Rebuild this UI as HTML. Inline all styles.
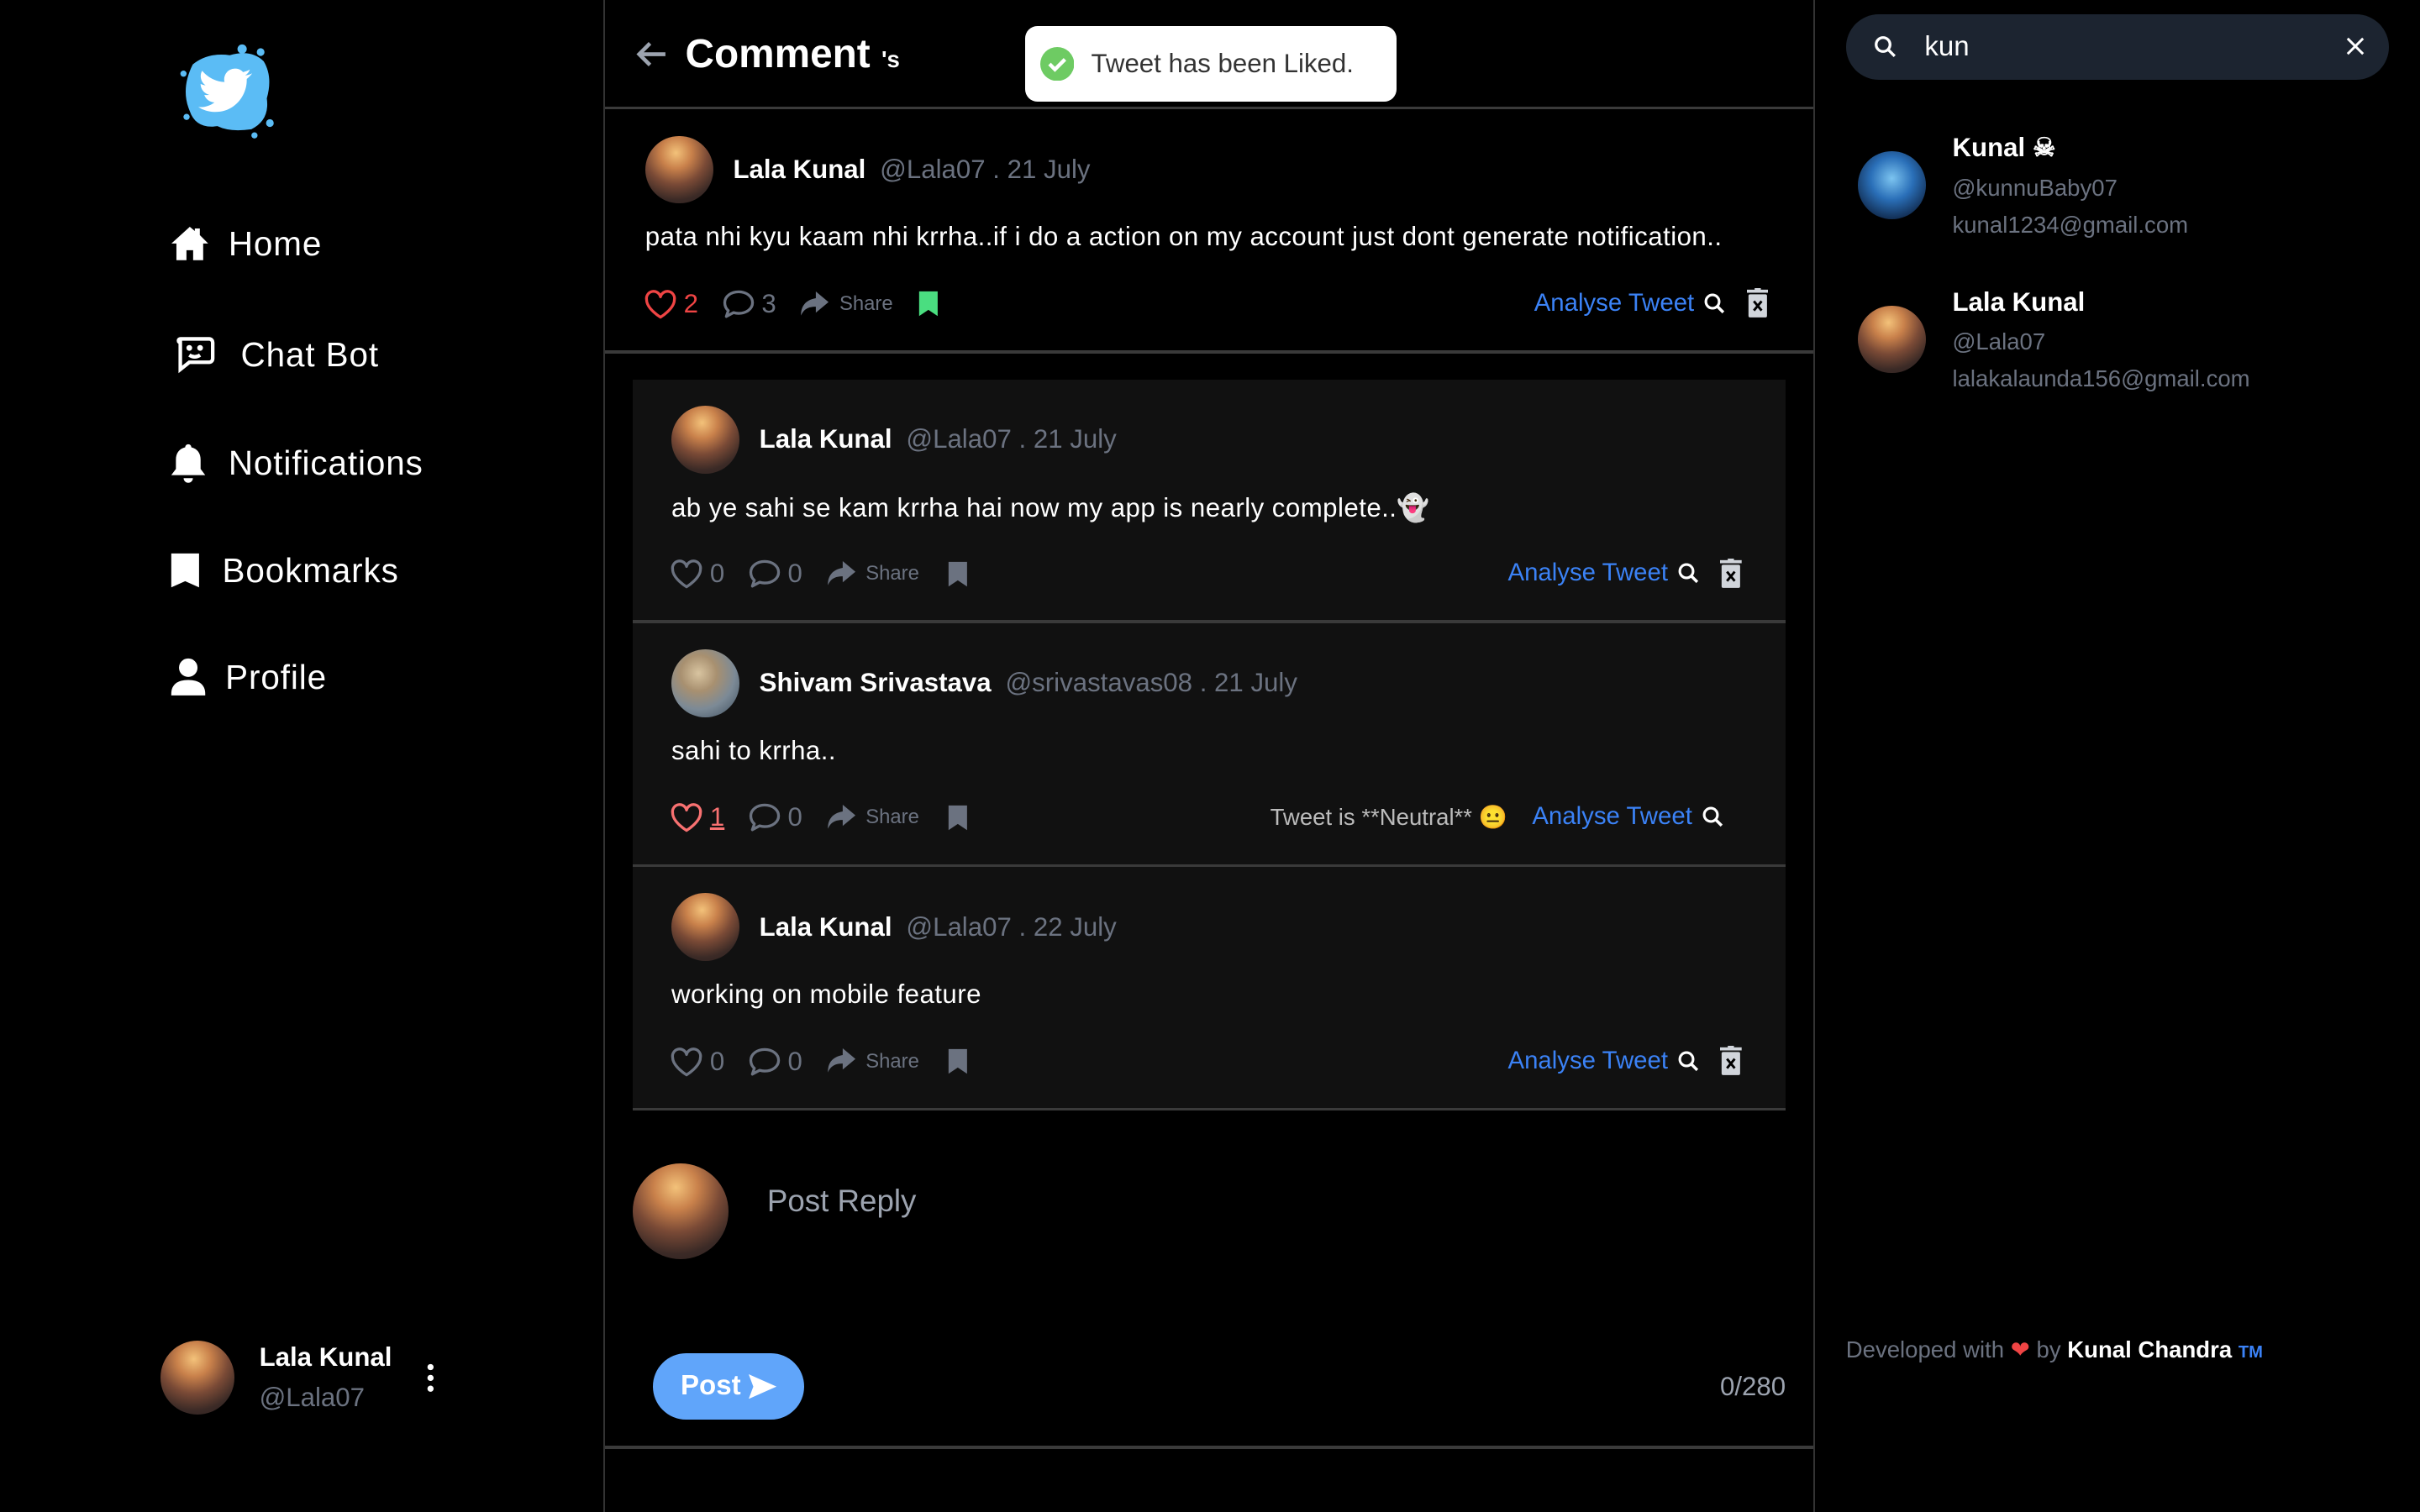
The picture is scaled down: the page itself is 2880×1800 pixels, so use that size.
<!DOCTYPE html>
<html><head><meta charset="utf-8">
<style>
*{box-sizing:border-box;margin:0;padding:0}
html,body{background:#000;overflow:hidden}
body{width:2880px;height:1800px}
#r{zoom:1.836735;width:1568px;height:980px;position:relative;font-family:"Liberation Sans",sans-serif;color:#fff}
.a{position:absolute}
.av{position:absolute;border-radius:50%;background:radial-gradient(circle at 45% 25%,#f3c27a 0,#c9814b 25%,#7a4a36 50%,#3b2a26 75%,#2a1f1f 100%)}
.nav{position:absolute;left:110px;font-size:22px;display:flex;align-items:center;letter-spacing:.5px}
.nm{font-weight:bold;font-size:17px}
.hd{color:#6b7280;font-size:17px}
.tx{font-size:17px;letter-spacing:.25px}
.act{position:absolute;display:flex;align-items:center;color:#6b7280;font-size:17px}
.sh{font-size:13px;margin-left:5px}
.blue{color:#3b82f6;font-size:16px}
.line{position:absolute;height:2px;background:#3a3a3a}
.act svg{display:block}
</style></head><body><div id="r">
<svg class="a" style="left:115px;top:28px" width="66" height="62" viewBox="0 0 66 62"><g fill="#5bbcf5"><path d="M10 14 Q20 6 34 8 Q48 4 56 12 Q62 22 58 36 Q60 50 48 56 Q34 58 26 54 Q12 56 8 44 Q2 30 10 14Z"/><circle cx="42" cy="4" r="3"/><circle cx="54" cy="6" r="2.5"/><circle cx="6" cy="48" r="2"/><circle cx="60" cy="52" r="2.5"/><circle cx="4" cy="20" r="2"/><circle cx="50" cy="60" r="2"/></g><path fill="#fff" d="M48 20c-1.3.6-2.6 1-4 1.1 1.4-.9 2.5-2.2 3-3.800-1.3.8-2.800 1.300-4.400 1.700a7 7 0 0 0-12 6.400c-5.800-.3-11-3.100-14.500-7.300-1.900 3.200-.8 7.400 2.200 9.400-1.100 0-2.200-.4-3.200-.9 0 3.400 2.400 6.300 5.600 7-1 .3-2.100.3-3.200.1.900 2.800 3.500 4.800 6.600 4.900-3 2.300-6.800 3.400-10.500 3 3.200 2.100 7 3.200 10.900 3.200 13.200 0 20.500-11 20.500-20.500v-.9c1.400-1 2.600-2.300 3.600-3.700z"/></svg>
<div class="nav" style="top:145px"><svg width="26" height="26" viewBox="0 0 24 24"><path fill="#fff" d="M12 2 1 12h3v10h6v-6h4v6h6V12h3L18 7V3h-3v1.5z"/></svg><span style="margin-left:12px">Home</span></div>
<div class="nav" style="top:216px;left:112px"><svg width="28" height="28" viewBox="0 0 24 24" fill="none" stroke="#fff" stroke-width="2"><path d="M4 3h16a2 2 0 0 1 2 2v9a2 2 0 0 1-2 2H9l-5 4V5a1 1 0 0 1 0-2z"/><circle cx="9" cy="8" r=".6" fill="#fff"/><circle cx="15" cy="8" r=".6" fill="#fff"/><path d="M9 12q3 2 6 0"/></svg><span style="margin-left:16px">Chat Bot</span></div>
<div class="nav" style="top:287px"><svg width="24" height="26" viewBox="0 0 24 26"><path fill="#fff" d="M12 1a2 2 0 0 1 2 2c4 1 6 4 6 8v6l3 4H1l3-4v-6c0-4 2-7 6-8a2 2 0 0 1 2-2zM9 23h6a3 3 0 0 1-6 0z"/></svg><span style="margin-left:14px">Notifications</span></div>
<div class="nav" style="top:357px"><svg width="20" height="24" viewBox="0 0 20 24"><path fill="#fff" d="M1 1h18v22l-9-4-9 4z"/></svg><span style="margin-left:14px">Bookmarks</span></div>
<div class="nav" style="top:426px"><svg width="24" height="26" viewBox="0 0 24 26"><circle cx="12" cy="7" r="6" fill="#fff"/><path fill="#fff" d="M1 24c0-6 4-9 11-9s11 3 11 9v1H1z"/></svg><span style="margin-left:12px">Profile</span></div>
<div class="av" style="left:104px;top:869px;width:48px;height:48px"></div>
<div class="a nm" style="left:168px;top:870px">Lala Kunal</div>
<div class="a hd" style="left:168px;top:896px">@Lala07</div>
<svg class="a" style="left:275px;top:883px" width="8" height="20"><circle cx="4" cy="3" r="2" fill="#fff"/><circle cx="4" cy="10" r="2" fill="#fff"/><circle cx="4" cy="17" r="2" fill="#fff"/></svg>
<div class="a" style="left:391px;top:0;width:1px;height:980px;background:#333"></div>
<div class="a" style="left:1175px;top:0;width:1px;height:980px;background:#333"></div>
<svg class="a" style="left:412px;top:26px" width="20" height="18" viewBox="0 0 20 18"><path d="M19 9H3M9 2 2 9l7 7" stroke="#9ca3af" stroke-width="2.5" fill="none"/></svg>
<div class="a" style="left:444px;top:20px;font-size:26px;font-weight:bold">Comment <span style="font-size:15px">'s</span></div>
<div class="a" style="left:664px;top:17px;width:241px;height:49px;background:#fff;border-radius:8px;display:flex;align-items:center;padding-left:10px;color:#333;font-size:17px"><svg width="22" height="22" viewBox="0 0 22 22"><circle cx="11" cy="11" r="11" fill="#6ecb63"/><path d="M6 11l3.5 3.5L16 8" stroke="#fff" stroke-width="2.4" fill="none"/></svg><span style="margin-left:11px">Tweet has been Liked.</span></div>
<div class="line" style="left:392px;top:69px;width:783px"></div>

<svg width="0" height="0" style="position:absolute"><defs>
<path id="ht" d="M12 20.5S3 15 3 9.2A4.6 4.6 0 0 1 12 7.3a4.6 4.6 0 0 1 9 1.9C21 15 12 20.5 12 20.5z" fill="none" stroke-width="1.8" stroke-linejoin="round"/>
<path id="cm" d="M12 4c5 0 9 3 9 7s-4 7-9 7c-1.2 0-2.300-.2-3.300-.5L4 20l1.300-3.800C3.800 14.900 3 13 3 11c0-4 4-7 9-7z" fill="none" stroke-width="1.8" stroke-linejoin="round"/>
<path id="sr" d="M13 3l9 7.500-9 7.500v-4.300c-5.500 0-8.500 1.800-10.500 6.300 0-6.500 3-11 10.500-12.300z"/>
<g id="tr"><rect x="1" y="4" width="12" height="15" rx="1" fill="#d1d5db"/><rect x="0" y="1" width="14" height="2" fill="#d1d5db"/><rect x="5" y="0" width="4" height="2" fill="#d1d5db"/><path d="M4.5 8.5l5 6M9.5 8.5l-5 6" stroke="#000" stroke-width="1.6"/></g>
<g id="mg"><circle cx="6" cy="6" r="4.3" stroke-width="1.7" fill="none"/><path d="M9.2 9.2l3.800 3.800" stroke-width="1.9"/></g>
</defs></svg>

<div class="av" style="left:418px;top:88px;width:44px;height:44px"></div>
<div class="a" style="left:475px;top:100px"><span class="nm">Lala Kunal</span> <span class="hd">&nbsp;@Lala07 . 21 July</span></div>
<div class="a tx" style="left:418px;top:144px">pata nhi kyu kaam nhi krrha..if i do a action on my account just dont generate notification..</div>
<div class="act" style="left:416px;top:185px"><svg width="24" height="24" viewBox="0 0 24 24" stroke="#ef4444"><use href="#ht"/></svg><span style="color:#ef4444;margin-left:3px">2</span>
<svg style="margin-left:14px" width="24" height="24" viewBox="0 0 24 24" stroke="#6b7280"><use href="#cm"/></svg><span style="margin-left:3px">3</span><svg style="margin-left:14px" width="22" height="22" viewBox="0 0 24 24" fill="#6b7280"><use href="#sr"/></svg><span class="sh">Share</span>
<svg style="margin-left:16px" width="14" height="18"><path d="M1 1h12v16l-6-4-6 4z" fill="#4ade80"/></svg></div>
<div class="act" style="left:994px;top:187px"><span class="blue">Analyse Tweet</span><svg style="margin-left:6px" width="14" height="14" stroke="#fff"><use href="#mg"/></svg><svg style="margin-left:14px" width="14" height="19"><use href="#tr"/></svg></div>
<div class="line" style="left:392px;top:227px;width:783px"></div>

<div class="a" style="left:410px;top:246px;width:747px;height:473px;background:#111"></div>
<div class="line" style="left:410px;top:402px;width:747px"></div>
<div class="line" style="left:410px;top:560px;width:747px"></div>
<div class="line" style="left:410px;top:718px;width:747px"></div>

<div class="av" style="left:435px;top:263px;width:44px;height:44px"></div>
<div class="a" style="left:492px;top:275px"><span class="nm">Lala Kunal</span> <span class="hd">&nbsp;@Lala07 . 21 July</span></div>
<div class="a tx" style="left:435px;top:319px">ab ye sahi se kam krrha hai now my app is nearly complete..👻</div>
<div class="act" style="left:433px;top:360px"><svg width="24" height="24" viewBox="0 0 24 24" stroke="#6b7280"><use href="#ht"/></svg><span style="margin-left:3px">0</span><svg style="margin-left:14px" width="24" height="24" viewBox="0 0 24 24" stroke="#6b7280"><use href="#cm"/></svg><span style="margin-left:3px">0</span><svg style="margin-left:14px" width="22" height="22" viewBox="0 0 24 24" fill="#6b7280"><use href="#sr"/></svg><span class="sh">Share</span><svg style="margin-left:18px" width="14" height="18"><path d="M1 1h12v16l-6-4-6 4z" fill="#6b7280"/></svg></div>
<div class="act" style="left:977px;top:362px"><span class="blue">Analyse Tweet</span><svg style="margin-left:6px" width="14" height="14" stroke="#fff"><use href="#mg"/></svg><svg style="margin-left:14px" width="14" height="19"><use href="#tr"/></svg></div>

<div class="av" style="left:435px;top:421px;width:44px;height:44px;background:radial-gradient(circle at 40% 35%,#d8c4a0 0,#a89070 30%,#7c8a96 60%,#3a4a5a 100%)"></div>
<div class="a" style="left:492px;top:433px"><span class="nm">Shivam Srivastava</span> <span class="hd">&nbsp;@srivastavas08 . 21 July</span></div>
<div class="a tx" style="left:435px;top:477px">sahi to krrha..</div>
<div class="act" style="left:433px;top:518px"><svg width="24" height="24" viewBox="0 0 24 24" stroke="#f87171"><use href="#ht"/></svg><span style="color:#f87171;margin-left:3px;text-decoration:underline">1</span><svg style="margin-left:14px" width="24" height="24" viewBox="0 0 24 24" stroke="#6b7280"><use href="#cm"/></svg><span style="margin-left:3px">0</span><svg style="margin-left:14px" width="22" height="22" viewBox="0 0 24 24" fill="#6b7280"><use href="#sr"/></svg><span class="sh">Share</span><svg style="margin-left:18px" width="14" height="18"><path d="M1 1h12v16l-6-4-6 4z" fill="#6b7280"/></svg></div>
<div class="act" style="left:823px;top:520px"><span style="color:#bbb;font-size:15px">Tweet is **Neutral** 😐</span><span class="blue" style="margin-left:16px">Analyse Tweet</span><svg style="margin-left:6px" width="14" height="14" stroke="#fff"><use href="#mg"/></svg></div>

<div class="av" style="left:435px;top:579px;width:44px;height:44px"></div>
<div class="a" style="left:492px;top:591px"><span class="nm">Lala Kunal</span> <span class="hd">&nbsp;@Lala07 . 22 July</span></div>
<div class="a tx" style="left:435px;top:635px">working on mobile feature</div>
<div class="act" style="left:433px;top:676px"><svg width="24" height="24" viewBox="0 0 24 24" stroke="#6b7280"><use href="#ht"/></svg><span style="margin-left:3px">0</span><svg style="margin-left:14px" width="24" height="24" viewBox="0 0 24 24" stroke="#6b7280"><use href="#cm"/></svg><span style="margin-left:3px">0</span><svg style="margin-left:14px" width="22" height="22" viewBox="0 0 24 24" fill="#6b7280"><use href="#sr"/></svg><span class="sh">Share</span><svg style="margin-left:18px" width="14" height="18"><path d="M1 1h12v16l-6-4-6 4z" fill="#6b7280"/></svg></div>
<div class="act" style="left:977px;top:678px"><span class="blue">Analyse Tweet</span><svg style="margin-left:6px" width="14" height="14" stroke="#fff"><use href="#mg"/></svg><svg style="margin-left:14px" width="14" height="19"><use href="#tr"/></svg></div>

<div class="av" style="left:410px;top:754px;width:62px;height:62px"></div>
<div class="a" style="left:497px;top:767px;font-size:20px;color:#9ca3af">Post Reply</div>
<div class="a" style="left:423px;top:877px;width:98px;height:43px;background:#60a5fa;border-radius:22px;display:flex;align-items:center;justify-content:center;font-weight:bold;font-size:18px">Post&nbsp;<svg width="18" height="16" viewBox="0 0 18 16"><path d="M0 0l18 8-18 8 3-8z" fill="#fff"/></svg></div>
<div class="a" style="left:1100px;top:889px;font-size:17px;color:#9ca3af;width:57px;text-align:right">0/280</div>
<div class="line" style="left:392px;top:937px;width:783px"></div>

<div class="a" style="left:1196px;top:9px;width:352px;height:43px;background:#1c2430;border-radius:22px"></div>
<svg class="a" style="left:1214px;top:23px" width="15" height="15" viewBox="0 0 15 15"><circle cx="6" cy="6" r="4.5" stroke="#fff" stroke-width="1.8" fill="none"/><path d="M9.5 9.5l4 4" stroke="#fff" stroke-width="1.8"/></svg>
<div class="a" style="left:1247px;top:20px;font-size:18px">kun</div>
<svg class="a" style="left:1520px;top:24px" width="12" height="12"><path d="M1 1l10 10M11 1 1 11" stroke="#fff" stroke-width="1.6"/></svg>
<div class="av" style="left:1204px;top:98px;width:44px;height:44px;background:radial-gradient(circle at 50% 40%,#7cc4f0 0,#2a6fb8 40%,#10284a 80%)"></div>
<div class="a nm" style="left:1265px;top:86px">Kunal ☠</div>
<div class="a hd" style="left:1265px;top:113px;font-size:15px">@kunnuBaby07</div>
<div class="a hd" style="left:1265px;top:137px;font-size:15px">kunal1234@gmail.com</div>
<div class="av" style="left:1204px;top:198px;width:44px;height:44px"></div>
<div class="a nm" style="left:1265px;top:186px">Lala Kunal</div>
<div class="a hd" style="left:1265px;top:213px;font-size:15px">@Lala07</div>
<div class="a hd" style="left:1265px;top:237px;font-size:15px">lalakalaunda156@gmail.com</div>
<div class="a" style="left:1196px;top:866px;font-size:15px;color:#6b7280">Developed with <span style="color:#ef4444">❤</span> by <b style="color:#fff">Kunal Chandra</b> <span style="color:#3b82f6;font-size:11px;font-weight:bold">TM</span></div>
</div></body></html>
